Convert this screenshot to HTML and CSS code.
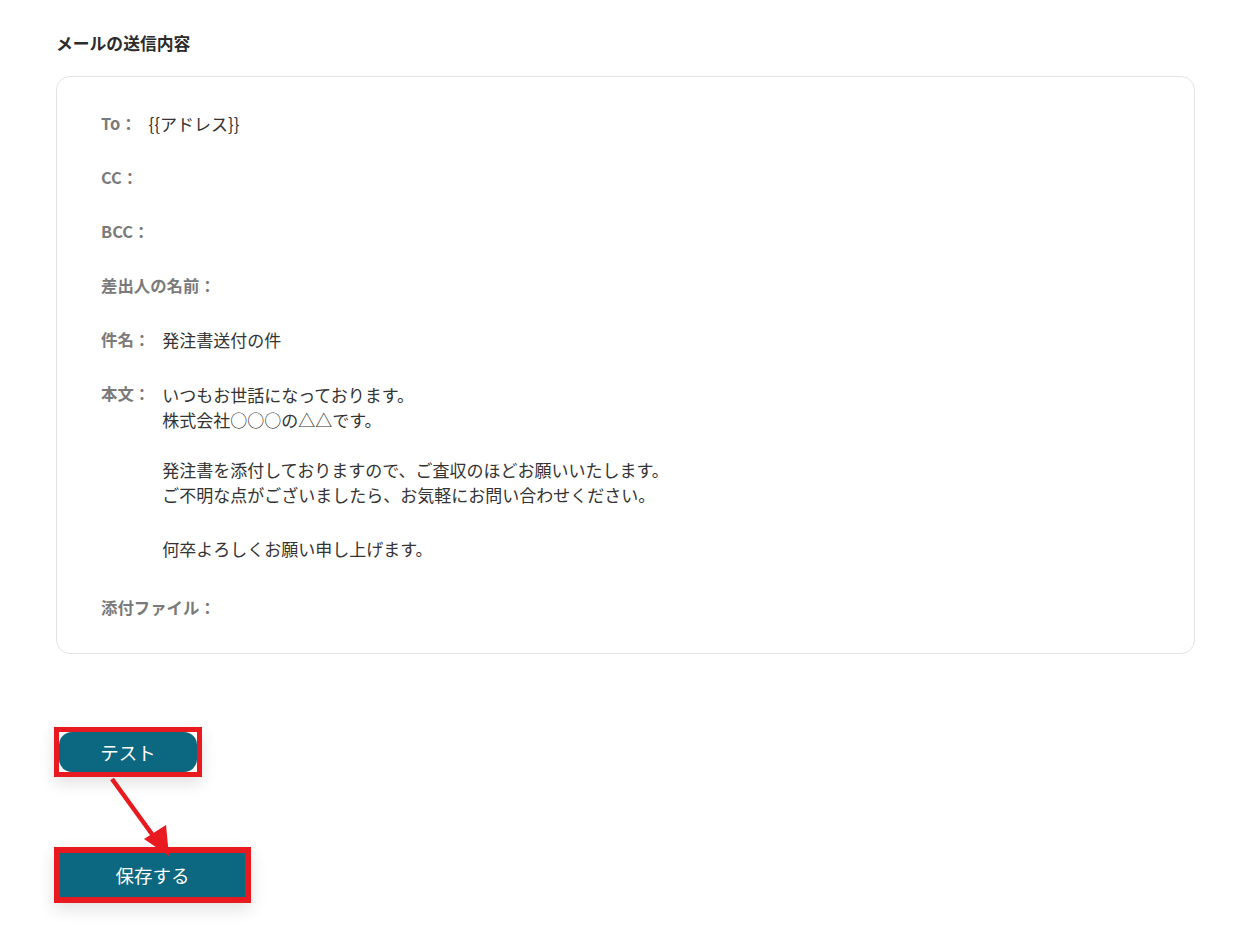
FILE: index.html
```html
<!DOCTYPE html>
<html lang="ja">
<head>
<meta charset="utf-8">
<link rel="stylesheet" href="styles.css">
</head>
<body>
<main class="page">
  <h2 class="title">メールの送信内容</h2>
  <section class="card">
    <div class="row"><span class="label">To：</span><span class="value value-to">{{アドレス}}</span></div>
    <div class="row"><span class="label">CC：</span></div>
    <div class="row"><span class="label">BCC：</span></div>
    <div class="row"><span class="label">差出人の名前：</span></div>
    <div class="row"><span class="label">件名：</span><span class="value">発注書送付の件</span></div>
    <div class="row row-body"><span class="label">本文：</span>
      <div class="value body">
        <p class="para">いつもお世話になっております。<br>株式会社○○○の△△です。</p>
        <p class="para">発注書を添付しておりますので、ご査収のほどお願いいたします。<br>ご不明な点がございましたら、お気軽にお問い合わせください。</p>
        <p class="para para-last">何卒よろしくお願い申し上げます。</p>
      </div>
    </div>
    <div class="row"><span class="label">添付ファイル：</span></div>
  </section>

  <div class="actions">
    <div class="mark mark-test"><button class="btn btn-test">テスト</button></div>
    <div class="mark mark-save"><button class="btn btn-save">保存する</button></div>
    <svg class="arrow" width="80" height="90" viewBox="0 0 80 90">
      <line x1="2" y1="2" x2="47" y2="64" stroke="#e8191f" stroke-width="4.5"/>
      <polygon points="34,62 56,48 59,79" fill="#e8191f"/>
    </svg>
  </div>
</main>
</body>
</html>
```

FILE: styles.css
```css
* { box-sizing: border-box; }
html, body { margin: 0; padding: 0; background: #fff; }
body {
  font-family: "Noto Sans CJK JP", "Noto Sans", sans-serif;
  color: #333;
}
.page {
  padding: 31px 39px 0 56px;
  position: relative;
}
.title {
  margin: 0 0 20px;
  font-size: 16.8px;
  line-height: 25px;
  font-weight: 700;
  color: #2b2b2b;
}
.card {
  border: 1px solid #e3e3e3;
  border-radius: 14px;
  padding: 34px 40px 33px 44px;
  display: flex;
  flex-direction: column;
  gap: 29px;
}
.row {
  display: flex;
  align-items: flex-start;
  line-height: 25px;
  min-height: 25px;
}
.label {
  font-size: 16.4px;
  font-weight: 700;
  color: #7a7a7a;
  margin-right: 12px;
  white-space: nowrap;
}
.value {
  font-size: 17px;
  color: #333;
}
.body { margin-top: 1px; }
.para { margin: 0; }
.para + .para { margin-top: 25px; }
.para + .para-last { margin-top: 29px; }
.para-last { margin-bottom: 5px; }

.actions {
  position: relative;
  padding: 73px 0 40px 0;
  display: flex;
  flex-direction: column;
  align-items: flex-start;
  gap: 70px;
}
.mark {
  border: 5px solid #e8191f;
  box-shadow: 0 6px 16px rgba(0, 0, 0, 0.12);
  background: #fff;
  margin-left: -2px;
}
.btn {
  display: block;
  border: 0;
  background: #0c6780;
  color: #fff;
  font-family: "Noto Sans CJK JP", "Noto Sans", sans-serif;
  font-size: 18.5px;
  padding: 0;
  cursor: pointer;
}
.btn-test {
  width: 138px;
  height: 40px;
  border-radius: 13px;
  line-height: 40px;
}
.mark-save { border-width: 6px; }
.btn-save {
  width: 185px;
  height: 44px;
  line-height: 44px;
}
.arrow {
  position: absolute;
  top: 123px;
  left: 54px;
}
```
